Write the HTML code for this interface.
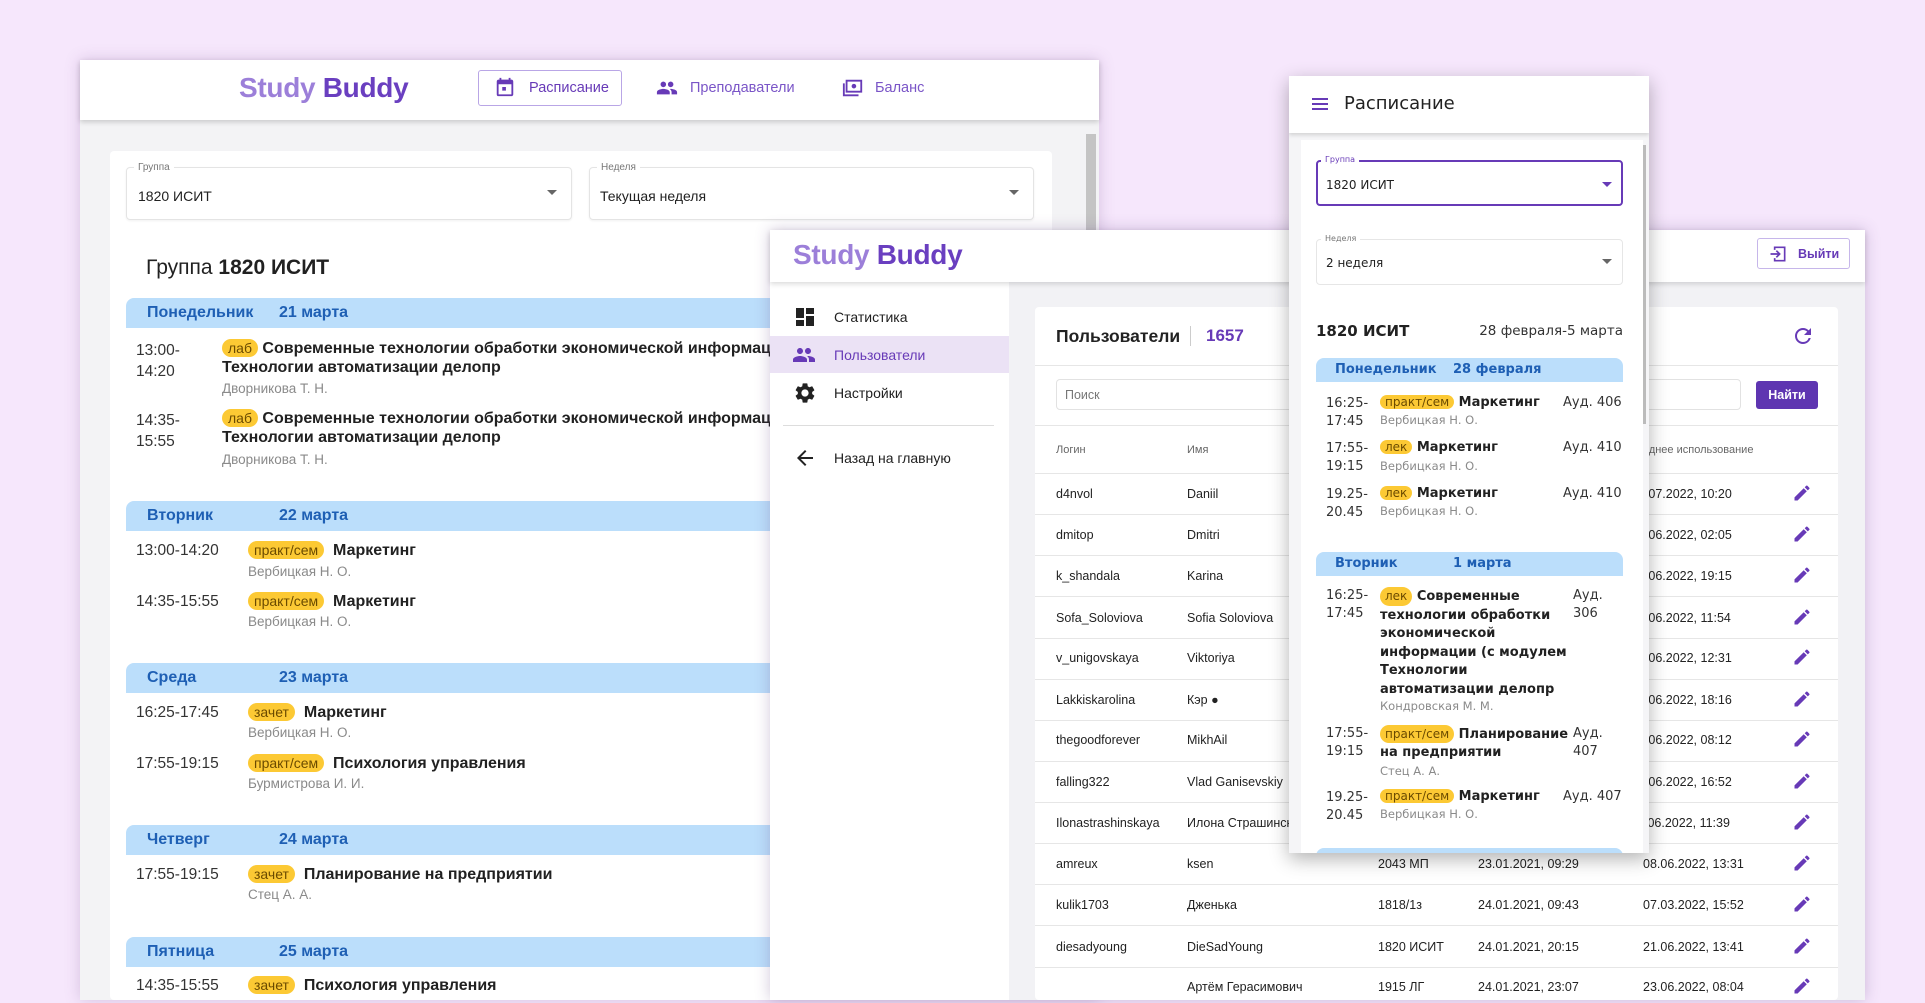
<!DOCTYPE html>
<html><head><meta charset="utf-8"><style>
*{box-sizing:border-box;margin:0;padding:0}
body{width:1925px;height:1000px;overflow:hidden;background:#f6e7fc;font-family:"Liberation Sans",Arial,sans-serif;position:relative;color:#212121}
.a{position:absolute;white-space:nowrap}
svg{display:block}
.logo{font-size:28px;font-weight:bold;letter-spacing:-0.3px}
.logo .s{color:#9c7fd9}.logo .b{color:#6a3fc0}
.day{position:absolute;background:#bbdefb;color:#1e5fb4;font-weight:bold;border-radius:8px 8px 0 0}
.bdg{display:inline-block;background:#fcc934;color:#6b4b00;border-radius:10px;font-weight:normal}
.t1{font-size:15.5px;color:#333}
.ti{font-size:16px;font-weight:bold;color:#212121}
.tc{font-size:13.5px;color:#8a8a8a}
.m{font-family:"DejaVu Sans",sans-serif}
.row{position:absolute;left:1035px;width:803px;height:1px;background:#e6e6e6}
.cell{position:absolute;font-size:12.5px;color:#222;white-space:nowrap}
</style></head><body>

<!-- WINDOW 1 -->
<div class="a" style="left:80px;top:60px;width:1019px;height:940px;background:#f3f3f5;box-shadow:0 0 14px rgba(120,80,140,.25)"></div>
<div class="a" style="left:80px;top:60px;width:1019px;height:60px;background:#fff;box-shadow:0 2px 5px rgba(0,0,0,.18)"></div>
<div class="a logo" style="left:239px;top:72px"><span class="s">Study</span> <span class="b">Buddy</span></div>
<div class="a" style="left:478px;top:70px;width:144px;height:36px;border:1.5px solid #b9a6e6;border-radius:3px"></div>
<svg class="a" style="left:494px;top:76px" width="22" height="22" viewBox="0 0 24 24"><path fill="#673ab7" d="M19 4h-1V2h-2v2H8V2H6v2H5c-1.11 0-2 .9-2 2v14a2 2 0 0 0 2 2h14c1.1 0 2-.9 2-2V6c0-1.1-.9-2-2-2zm0 16H5V9h14v11zM9 12h4v4H9z"/></svg>
<div class="a" style="left:529px;top:80px;font-size:14.5px;color:#673ab7">Расписание</div>
<svg class="a" style="left:655px;top:77px" width="24" height="22" viewBox="0 0 24 24"><path fill="#673ab7" d="M16 11c1.66 0 2.99-1.34 2.99-3S17.66 5 16 5c-1.66 0-3 1.34-3 3s1.34 3 3 3zm-8 0c1.66 0 2.99-1.34 2.99-3S9.66 5 8 5C6.34 5 5 6.34 5 8s1.34 3 3 3zm0 2c-2.33 0-7 1.17-7 3.5V19h14v-2.5c0-2.33-4.67-3.5-7-3.5zm8 0c-.29 0-.62.02-.97.05 1.16.84 1.97 1.97 1.97 3.45V19h6v-2.5c0-2.33-4.67-3.5-7-3.5z"/></svg>
<div class="a" style="left:690px;top:80px;font-size:14.5px;color:#7a55c7">Преподаватели</div>
<svg class="a" style="left:841px;top:77px" width="24" height="22" viewBox="0 0 24 24"><path fill="none" stroke="#673ab7" stroke-width="2" d="M5 4h16v12H5z M2 7v13h16"/><circle cx="13" cy="10" r="2.5" fill="#673ab7"/></svg>
<div class="a" style="left:875px;top:80px;font-size:14.5px;color:#7a55c7">Баланс</div>
<div class="a" style="left:1086px;top:134px;width:10px;height:100px;background:#c4c4c4"></div>
<div class="a" style="left:110px;top:151px;width:942px;height:849px;background:#fff;border-radius:4px"></div>
<div class="a" style="left:126px;top:167px;width:446px;height:53px;border:1px solid #e4e4e4;border-radius:4px;box-shadow:0 1px 2px rgba(0,0,0,.06)"></div>
<div class="a" style="left:134px;top:162px;background:#fff;padding:0 4px;font-size:10px;color:#777">Группа</div>
<div class="a" style="left:138px;top:188px;font-size:14px">1820 ИСИТ</div>
<div class="a" style="left:547px;top:190px;border-left:5px solid transparent;border-right:5px solid transparent;border-top:5px solid #666"></div>
<div class="a" style="left:589px;top:167px;width:445px;height:53px;border:1px solid #e4e4e4;border-radius:4px;box-shadow:0 1px 2px rgba(0,0,0,.06)"></div>
<div class="a" style="left:597px;top:162px;background:#fff;padding:0 4px;font-size:10px;color:#777">Неделя</div>
<div class="a" style="left:600px;top:188px;font-size:14px">Текущая неделя</div>
<div class="a" style="left:1009px;top:190px;border-left:5px solid transparent;border-right:5px solid transparent;border-top:5px solid #666"></div>
<div class="a" style="left:146px;top:256px;font-size:21px">Группа <b>1820 ИСИТ</b></div>

<div class="day" style="left:126px;top:298px;width:700px;height:30px"><span class="a" style="left:21px;top:6px;font-size:16px">Понедельник</span><span class="a" style="left:153px;top:6px;font-size:16px">21 марта</span></div>
<div class="a t1" style="left:136px;top:340px;line-height:21px;white-space:normal;width:50px">13:00-<br>14:20</div>
<div class="a ti" style="left:222px;top:339px"><span class="bdg" style="padding:1px 6px;font-size:14px">лаб</span> Современные технологии обработки экономической информации</div>
<div class="a ti" style="left:222px;top:359px">Технологии автоматизации делопр</div>
<div class="a tc" style="left:222px;top:381px">Дворникова Т. Н.</div>
<div class="a t1" style="left:136px;top:410px;line-height:21px;white-space:normal;width:50px">14:35-<br>15:55</div>
<div class="a ti" style="left:222px;top:409px"><span class="bdg" style="padding:1px 6px;font-size:14px">лаб</span> Современные технологии обработки экономической информации</div>
<div class="a ti" style="left:222px;top:429px">Технологии автоматизации делопр</div>
<div class="a tc" style="left:222px;top:452px">Дворникова Т. Н.</div>

<div class="day" style="left:126px;top:501px;width:700px;height:30px"><span class="a" style="left:21px;top:6px;font-size:16px">Вторник</span><span class="a" style="left:153px;top:6px;font-size:16px">22 марта</span></div>
<div class="a t1" style="left:136px;top:542px">13:00-14:20</div>
<div class="a ti" style="left:248px;top:541px"><span class="bdg" style="padding:1px 6px;font-size:14px">практ/сем</span>&nbsp; Маркетинг</div>
<div class="a tc" style="left:248px;top:564px">Вербицкая Н. О.</div>
<div class="a t1" style="left:136px;top:593px">14:35-15:55</div>
<div class="a ti" style="left:248px;top:592px"><span class="bdg" style="padding:1px 6px;font-size:14px">практ/сем</span>&nbsp; Маркетинг</div>
<div class="a tc" style="left:248px;top:614px">Вербицкая Н. О.</div>

<div class="day" style="left:126px;top:663px;width:700px;height:30px"><span class="a" style="left:21px;top:6px;font-size:16px">Среда</span><span class="a" style="left:153px;top:6px;font-size:16px">23 марта</span></div>
<div class="a t1" style="left:136px;top:704px">16:25-17:45</div>
<div class="a ti" style="left:248px;top:703px"><span class="bdg" style="padding:1px 6px;font-size:14px">зачет</span>&nbsp; Маркетинг</div>
<div class="a tc" style="left:248px;top:725px">Вербицкая Н. О.</div>
<div class="a t1" style="left:136px;top:755px">17:55-19:15</div>
<div class="a ti" style="left:248px;top:754px"><span class="bdg" style="padding:1px 6px;font-size:14px">практ/сем</span>&nbsp; Психология управления</div>
<div class="a tc" style="left:248px;top:776px">Бурмистрова И. И.</div>

<div class="day" style="left:126px;top:825px;width:700px;height:30px"><span class="a" style="left:21px;top:6px;font-size:16px">Четверг</span><span class="a" style="left:153px;top:6px;font-size:16px">24 марта</span></div>
<div class="a t1" style="left:136px;top:866px">17:55-19:15</div>
<div class="a ti" style="left:248px;top:865px"><span class="bdg" style="padding:1px 6px;font-size:14px">зачет</span>&nbsp; Планирование на предприятии</div>
<div class="a tc" style="left:248px;top:887px">Стец А. А.</div>

<div class="day" style="left:126px;top:937px;width:700px;height:30px"><span class="a" style="left:21px;top:6px;font-size:16px">Пятница</span><span class="a" style="left:153px;top:6px;font-size:16px">25 марта</span></div>
<div class="a t1" style="left:136px;top:977px">14:35-15:55</div>
<div class="a ti" style="left:248px;top:976px"><span class="bdg" style="padding:1px 6px;font-size:14px">зачет</span>&nbsp; Психология управления</div>

<!-- WINDOW 2 -->
<div class="a" style="left:770px;top:230px;width:1095px;height:770px;background:#f2f2f5;box-shadow:0 0 14px rgba(100,70,130,.3)"></div>
<div class="a" style="left:770px;top:230px;width:1095px;height:52px;background:#fff;box-shadow:0 2px 5px rgba(0,0,0,.15);z-index:1"></div>
<div class="a logo" style="left:793px;top:239px;z-index:2"><span class="s">Study</span> <span class="b">Buddy</span></div>
<div class="a" style="left:1757px;top:238px;width:93px;height:31px;border:1.5px solid #c6b6ea;border-radius:3px;z-index:2"></div>
<svg class="a" style="left:1768px;top:244px;z-index:2" width="20" height="20" viewBox="0 0 24 24"><path fill="none" stroke="#673ab7" stroke-width="2" d="M8 7V4h12v16H8v-3M3 12h11M10 8l4 4-4 4"/></svg>
<div class="a" style="left:1798px;top:247px;font-size:12.5px;font-weight:bold;color:#673ab7;z-index:2">Выйти</div>
<div class="a" style="left:770px;top:282px;width:239px;height:718px;background:#fff"></div>
<svg class="a" style="left:793px;top:305px" width="24" height="24" viewBox="0 0 24 24"><path fill="#222" d="M3 13h8V3H3v10zm0 8h8v-6H3v6zm10 0h8V11h-8v10zm0-18v6h8V3h-8z"/></svg>
<div class="a" style="left:834px;top:309px;font-size:14px">Статистика</div>
<div class="a" style="left:770px;top:336px;width:239px;height:37px;background:#ebe2f5"></div>
<svg class="a" style="left:792px;top:343px" width="24" height="24" viewBox="0 0 24 24"><path fill="#673ab7" d="M16 11c1.66 0 2.99-1.34 2.99-3S17.66 5 16 5c-1.66 0-3 1.34-3 3s1.34 3 3 3zm-8 0c1.66 0 2.99-1.34 2.99-3S9.66 5 8 5C6.34 5 5 6.34 5 8s1.34 3 3 3zm0 2c-2.33 0-7 1.17-7 3.5V19h14v-2.5c0-2.33-4.67-3.5-7-3.5zm8 0c-.29 0-.62.02-.97.05 1.16.84 1.97 1.97 1.97 3.45V19h6v-2.5c0-2.33-4.67-3.5-7-3.5z"/></svg>
<div class="a" style="left:834px;top:347px;font-size:14px;color:#673ab7">Пользователи</div>
<svg class="a" style="left:793px;top:381px" width="24" height="24" viewBox="0 0 24 24"><path fill="#222" d="M19.14 12.94c.04-.3.06-.61.06-.94 0-.32-.02-.64-.07-.94l2.03-1.58a.49.49 0 0 0 .12-.61l-1.92-3.32a.488.488 0 0 0-.59-.22l-2.39.96c-.5-.38-1.03-.7-1.62-.94l-.36-2.54a.484.484 0 0 0-.48-.41h-3.84c-.24 0-.43.17-.47.41l-.36 2.54c-.59.24-1.13.57-1.62.94l-2.39-.96c-.22-.08-.47 0-.59.22L2.74 8.87c-.12.21-.08.47.12.61l2.03 1.58c-.05.3-.09.63-.09.94s.02.64.07.94l-2.03 1.58a.49.49 0 0 0-.12.61l1.92 3.32c.12.22.37.29.59.22l2.39-.96c.5.38 1.03.7 1.62.94l.36 2.54c.05.24.24.41.48.41h3.84c.24 0 .44-.17.47-.41l.36-2.54c.59-.24 1.13-.56 1.62-.94l2.39.96c.22.08.47 0 .59-.22l1.92-3.32c.12-.22.07-.47-.12-.61l-2.01-1.58zM12 15.6c-1.98 0-3.6-1.62-3.6-3.6s1.62-3.6 3.6-3.6 3.6 1.62 3.6 3.6-1.62 3.6-3.6 3.6z"/></svg>
<div class="a" style="left:834px;top:385px;font-size:14px">Настройки</div>
<div class="a" style="left:783px;top:425px;width:211px;height:1px;background:#ddd"></div>
<svg class="a" style="left:793px;top:446px" width="24" height="24" viewBox="0 0 24 24"><path fill="#222" d="M20 11H7.83l5.59-5.59L12 4l-8 8 8 8 1.41-1.41L7.83 13H20v-2z"/></svg>
<div class="a" style="left:834px;top:450px;font-size:14px">Назад на главную</div>

<div class="a" style="left:1035px;top:307px;width:803px;height:693px;background:#fff;border-radius:4px"></div>
<div class="a" style="left:1056px;top:326px;font-size:17.5px;font-weight:bold;color:#222">Пользователи</div>
<div class="a" style="left:1190px;top:326px;width:1px;height:20px;background:#ccc"></div>
<div class="a" style="left:1206px;top:326px;font-size:17px;font-weight:bold;color:#673ab7">1657</div>
<svg class="a" style="left:1791px;top:324px" width="24" height="24" viewBox="0 0 24 24"><path fill="#673ab7" d="M17.65 6.35A7.958 7.958 0 0 0 12 4c-4.42 0-7.99 3.58-7.99 8s3.57 8 7.99 8c3.73 0 6.84-2.55 7.73-6h-2.08A5.99 5.99 0 0 1 12 18c-3.31 0-6-2.69-6-6s2.690-6 6-6c1.66 0 3.14.69 4.22 1.78L13 11h7V4l-2.35 2.35z"/></svg>
<div class="row" style="top:365px"></div>
<div class="a" style="left:1056px;top:379px;width:685px;height:31px;border:1px solid #e2e2e2;border-radius:4px"></div>
<div class="a" style="left:1065px;top:388px;font-size:12.5px;color:#777">Поиск</div>
<div class="a" style="left:1756px;top:381px;width:62px;height:28px;background:#5e35b1;border-radius:3px;color:#fff;font-size:12.5px;font-weight:bold;text-align:center;line-height:28px">Найти</div>
<div class="row" style="top:425px"></div>
<div class="cell" style="left:1056px;top:444px;font-size:11px;color:#666">Логин</div>
<div class="cell" style="left:1187px;top:444px;font-size:11px;color:#666">Имя</div>
<div class="cell" style="left:1617px;top:444px;font-size:11px;color:#666">Последнее использование</div>
<div class="row" style="top:473px"></div>

<div class="cell" style="left:1056px;top:487px">d4nvol</div><div class="cell" style="left:1187px;top:487px">Daniil</div><div class="cell" style="left:1631px;top:487px">01.07.2022, 10:20</div><div class="row" style="top:514px"></div>
<div class="cell" style="left:1056px;top:528px">dmitop</div><div class="cell" style="left:1187px;top:528px">Dmitri</div><div class="cell" style="left:1631px;top:528px">17.06.2022, 02:05</div><div class="row" style="top:555px"></div>
<div class="cell" style="left:1056px;top:569px">k_shandala</div><div class="cell" style="left:1187px;top:569px">Karina</div><div class="cell" style="left:1631px;top:569px">17.06.2022, 19:15</div><div class="row" style="top:596px"></div>
<div class="cell" style="left:1056px;top:611px">Sofa_Soloviova</div><div class="cell" style="left:1187px;top:611px">Sofia Soloviova</div><div class="cell" style="left:1631px;top:611px">12.06.2022, 11:54</div><div class="row" style="top:638px"></div>
<div class="cell" style="left:1056px;top:651px">v_unigovskaya</div><div class="cell" style="left:1187px;top:651px">Viktoriya</div><div class="cell" style="left:1631px;top:651px">13.06.2022, 12:31</div><div class="row" style="top:679px"></div>
<div class="cell" style="left:1056px;top:693px">Lakkiskarolina</div><div class="cell" style="left:1187px;top:693px">Кэр ●</div><div class="cell" style="left:1631px;top:693px">18.06.2022, 18:16</div><div class="row" style="top:720px"></div>
<div class="cell" style="left:1056px;top:733px">thegoodforever</div><div class="cell" style="left:1187px;top:733px">MikhAil</div><div class="cell" style="left:1631px;top:733px">14.06.2022, 08:12</div><div class="row" style="top:761px"></div>
<div class="cell" style="left:1056px;top:775px">falling322</div><div class="cell" style="left:1187px;top:775px">Vlad Ganisevskiy</div><div class="cell" style="left:1631px;top:775px">12.06.2022, 16:52</div><div class="row" style="top:802px"></div>
<div class="cell" style="left:1056px;top:816px">Ilonastrashinskaya</div><div class="cell" style="left:1187px;top:816px">Илона Страшинская</div><div class="cell" style="left:1631px;top:816px">11.06.2022, 11:39</div><div class="row" style="top:843px"></div>
<div class="cell" style="left:1056px;top:857px">amreux</div><div class="cell" style="left:1187px;top:857px">ksen</div><div class="cell" style="left:1378px;top:857px">2043 МП</div><div class="cell" style="left:1478px;top:857px">23.01.2021, 09:29</div><div class="cell" style="left:1643px;top:857px">08.06.2022, 13:31</div><div class="row" style="top:884px"></div>
<div class="cell" style="left:1056px;top:898px">kulik1703</div><div class="cell" style="left:1187px;top:898px">Дженька</div><div class="cell" style="left:1378px;top:898px">1818/1з</div><div class="cell" style="left:1478px;top:898px">24.01.2021, 09:43</div><div class="cell" style="left:1643px;top:898px">07.03.2022, 15:52</div><div class="row" style="top:925px"></div>
<div class="cell" style="left:1056px;top:940px">diesadyoung</div><div class="cell" style="left:1187px;top:940px">DieSadYoung</div><div class="cell" style="left:1378px;top:940px">1820 ИСИТ</div><div class="cell" style="left:1478px;top:940px">24.01.2021, 20:15</div><div class="cell" style="left:1643px;top:940px">21.06.2022, 13:41</div><div class="row" style="top:967px"></div>
<div class="cell" style="left:1187px;top:980px">Артём Герасимович</div><div class="cell" style="left:1378px;top:980px">1915 ЛГ</div><div class="cell" style="left:1478px;top:980px">24.01.2021, 23:07</div><div class="cell" style="left:1643px;top:980px">23.06.2022, 08:04</div>

<svg class="a" style="left:1792px;top:483px" width="20" height="520" viewBox="0 0 20 520"><defs><path id="p" fill="#673ab7" d="M2.5 14.4V17.5h3.1L14.8 8.3 11.7 5.2 2.5 14.4zM17.3 5.9a.83.83 0 0 0 0-1.2l-1.9-1.9a.83.83 0 0 0-1.2 0l-1.5 1.5 3.1 3.1 1.5-1.5z"/></defs>
<use href="#p" y="0"/><use href="#p" y="41"/><use href="#p" y="82"/><use href="#p" y="124"/><use href="#p" y="164"/><use href="#p" y="206"/><use href="#p" y="246"/><use href="#p" y="288"/><use href="#p" y="329"/><use href="#p" y="370"/><use href="#p" y="411"/><use href="#p" y="453"/><use href="#p" y="493"/></svg>

<!-- WINDOW 3 -->
<div class="a m" style="left:1289px;top:76px;width:360px;height:777px;background:#f5f5f7;box-shadow:0 6px 18px rgba(0,0,0,.3);overflow:hidden;z-index:5">
  <div class="a" style="left:0;top:0;width:360px;height:57px;background:#fff;box-shadow:0 2px 4px rgba(0,0,0,.15);z-index:2"></div>
  <div class="a" style="left:23px;top:22px;width:16px;height:2px;background:#673ab7;box-shadow:0 5px 0 #673ab7,0 10px 0 #673ab7;z-index:3"></div>
  <div class="a" style="left:55px;top:17px;font-size:18px;color:#222;z-index:3">Расписание</div>
  <div class="a" style="left:12px;top:64px;width:342px;height:713px;background:#fff"></div>
  <div class="a" style="left:354px;top:69px;width:3px;height:279px;background:#bbb"></div>
  <div class="a" style="left:27px;top:84px;width:307px;height:46px;border:2px solid #673ab7;border-radius:4px"></div>
  <div class="a" style="left:32px;top:79px;background:#fff;padding:0 4px;font-size:8px;color:#673ab7">Группа</div>
  <div class="a" style="left:37px;top:102px;font-size:12px">1820 ИСИТ</div>
  <div class="a" style="left:313px;top:106px;border-left:5px solid transparent;border-right:5px solid transparent;border-top:5px solid #673ab7"></div>
  <div class="a" style="left:27px;top:163px;width:307px;height:46px;border:1px solid #e6e6e6;border-radius:4px"></div>
  <div class="a" style="left:32px;top:158px;background:#fff;padding:0 4px;font-size:8px;color:#777">Неделя</div>
  <div class="a" style="left:37px;top:180px;font-size:12px">2 неделя</div>
  <div class="a" style="left:313px;top:183px;border-left:5px solid transparent;border-right:5px solid transparent;border-top:5px solid #666"></div>
  <div class="a" style="left:27px;top:246px;font-size:15px;font-weight:bold">1820 ИСИТ</div>
  <div class="a" style="right:26px;top:247px;font-size:13.5px;color:#333">28 февраля-5 марта</div>

  <div class="day" style="left:27px;top:282px;width:307px;height:24px;font-size:13px"><span class="a" style="left:19px;top:4px">Понедельник</span><span class="a" style="left:137px;top:4px">28 февраля</span></div>
  <div class="a" style="left:37px;top:319px;font-size:13px;line-height:18px;color:#333">16:25-<br>17:45</div>
  <div class="a" style="left:91px;top:319px;font-size:13px;font-weight:bold"><span class="bdg" style="padding:0 5px;font-size:12px">практ/сем</span> Маркетинг</div>
  <div class="a" style="left:274px;top:319px;font-size:13px;color:#333">Ауд. 406</div>
  <div class="a" style="left:91px;top:337px;font-size:11.5px;color:#8a8a8a">Вербицкая Н. О.</div>
  <div class="a" style="left:37px;top:364px;font-size:13px;line-height:18px;color:#333">17:55-<br>19:15</div>
  <div class="a" style="left:91px;top:364px;font-size:13px;font-weight:bold"><span class="bdg" style="padding:0 5px;font-size:12px">лек</span> Маркетинг</div>
  <div class="a" style="left:274px;top:364px;font-size:13px;color:#333">Ауд. 410</div>
  <div class="a" style="left:91px;top:383px;font-size:11.5px;color:#8a8a8a">Вербицкая Н. О.</div>
  <div class="a" style="left:37px;top:410px;font-size:13px;line-height:18px;color:#333">19.25-<br>20.45</div>
  <div class="a" style="left:91px;top:410px;font-size:13px;font-weight:bold"><span class="bdg" style="padding:0 5px;font-size:12px">лек</span> Маркетинг</div>
  <div class="a" style="left:274px;top:410px;font-size:13px;color:#333">Ауд. 410</div>
  <div class="a" style="left:91px;top:428px;font-size:11.5px;color:#8a8a8a">Вербицкая Н. О.</div>

  <div class="day" style="left:27px;top:476px;width:307px;height:24px;font-size:13px"><span class="a" style="left:19px;top:4px">Вторник</span><span class="a" style="left:137px;top:4px">1 марта</span></div>
  <div class="a" style="left:37px;top:511px;font-size:13px;line-height:18px;color:#333">16:25-<br>17:45</div>
  <div class="a" style="left:91px;top:511px;font-size:13px;font-weight:bold;line-height:18.5px;white-space:normal;width:190px"><span class="bdg" style="padding:0 5px;font-size:12px">лек</span> Современные технологии обработки экономической информации (с модулем Технологии автоматизации делопр</div>
  <div class="a" style="left:284px;top:511px;font-size:13px;line-height:18px;color:#333">Ауд.<br>306</div>
  <div class="a" style="left:91px;top:623px;font-size:11.5px;color:#8a8a8a">Кондровская М. М.</div>
  <div class="a" style="left:37px;top:649px;font-size:13px;line-height:18px;color:#333">17:55-<br>19:15</div>
  <div class="a" style="left:91px;top:649px;font-size:13px;font-weight:bold;line-height:18px"><span class="bdg" style="padding:0 5px;font-size:12px">практ/сем</span> Планирование<br>на предприятии</div>
  <div class="a" style="left:284px;top:649px;font-size:13px;line-height:18px;color:#333">Ауд.<br>407</div>
  <div class="a" style="left:91px;top:688px;font-size:11.5px;color:#8a8a8a">Стец А. А.</div>
  <div class="a" style="left:37px;top:713px;font-size:13px;line-height:18px;color:#333">19.25-<br>20.45</div>
  <div class="a" style="left:91px;top:713px;font-size:13px;font-weight:bold"><span class="bdg" style="padding:0 5px;font-size:12px">практ/сем</span> Маркетинг</div>
  <div class="a" style="left:274px;top:713px;font-size:13px;color:#333">Ауд. 407</div>
  <div class="a" style="left:91px;top:731px;font-size:11.5px;color:#8a8a8a">Вербицкая Н. О.</div>
  <div class="a" style="left:27px;top:772px;width:307px;height:10px;background:#bbdefb;border-radius:8px 8px 0 0"></div>
</div>
</body></html>
